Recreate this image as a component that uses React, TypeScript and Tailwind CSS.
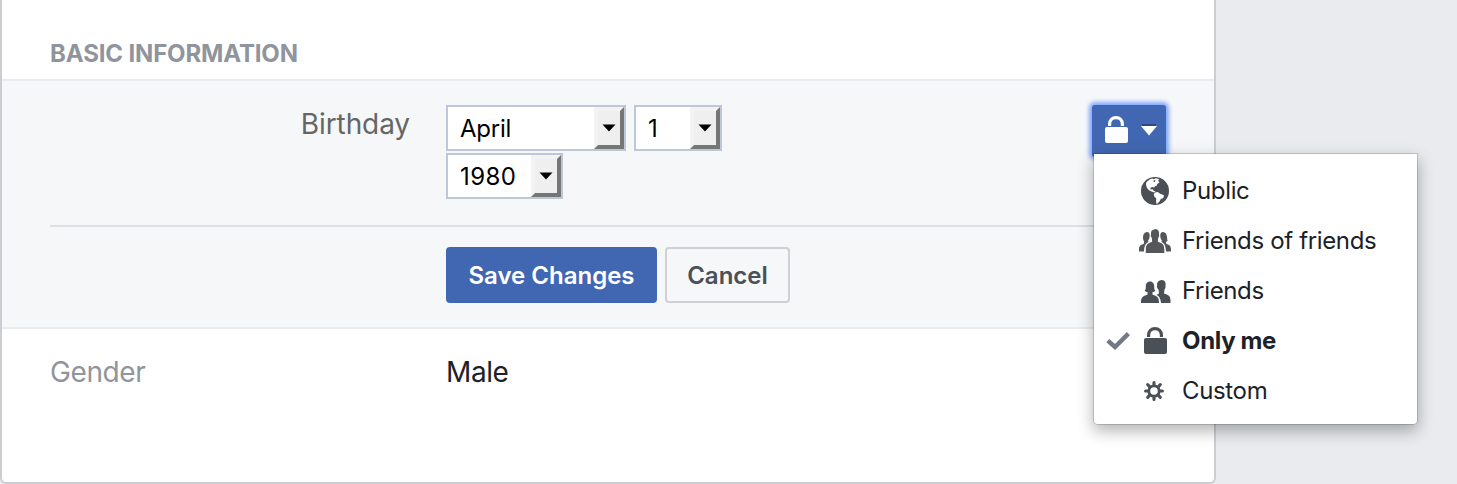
import type { ReactNode } from 'react';

function LockIcon() {
  return (
    <svg width="24" height="28" viewBox="0 0 24 28" fill="none">
      <path d="M4.6 10V8C4.6 4.2 7.3 1.6 11 1.6S17.4 4.2 17.4 8V10" stroke="currentColor" strokeWidth="3.2" />
      <rect x="0" y="11" width="23" height="16" rx="2" fill="currentColor" />
    </svg>
  );
}

function GlobeIcon() {
  return (
    <svg width="28" height="28" viewBox="0 0 28 28">
      <circle cx="14" cy="14" r="14" fill="#4b4f56" />
      <path
        d="M5.2 5.6C6.8 3.5 9 2 11.3 1.4L12.6 2.2L14.6 1.2L18.2 1.9L17.2 3.6L18.4 5.4L16.2 7L15.6 8.8L13.8 9.2L13.4 10.6L11.2 10L9.4 10.7L9.6 12.4L12 12.2L12.3 13.6L14.6 14.6L13.1 15.4L10.6 14.4L8 13.3L6 11L5.1 8Z"
        fill="#fff"
      />
      <path
        d="M14 15.4L16.8 15L19.2 16.7L23 18.2L22.3 21L19.8 22.1L18.3 24.8L15.6 27.2L15 24L15.3 21.5L13.3 19.4L12.8 17.2Z"
        fill="#fff"
      />
      <path d="M12.6 3.4L14.4 3.1L14 4.8L12.5 5.1Z" fill="#4b4f56" />
    </svg>
  );
}

function GroupIcon() {
  return (
    <svg width="32" height="24" viewBox="0 0 32 24" fill="#555659">
      <path d="M7.2 3.2C9 2.5 11.2 4 10.7 7.2C10.6 9.3 9.8 10.6 9.2 11.3L9.4 13C7.1 14.4 5.3 15.8 5 22.6H0V20.5C0 16.8 1.5 16 4.8 14.8L5.1 12.5C3.6 10.5 3.2 4.2 7.2 3.2Z" />
      <path d="M24.8 3.2C23 2.5 20.8 4 21.3 7.2C21.4 9.3 22.2 10.6 22.8 11.3L22.6 13C24.9 14.4 26.7 15.8 27 22.6H32V20.5C32 16.8 30.5 16 27.2 14.8L26.9 13L28.6 11.7C27.6 9.5 28.8 4 24.8 3.2Z" />
      <path d="M16 0C19.8 .2 20.3 3 20 5.4C20.6 6.4 19.8 8.3 19.2 8.8L18.8 12.7C22.5 14.1 25.3 14.6 25.3 20.5V24H6.8V20.5C6.8 14.6 9.6 14.1 13.2 12.7L12.8 8.8C12.2 8.3 11.4 6.4 12 5.4C11.7 2.5 12.8 1.1 14.5 .8Z" />
    </svg>
  );
}

function FriendsIcon() {
  return (
    <svg width="30" height="23" viewBox="0 0 30 23" fill="#4b4f56">
      <path d="M9 1.5C12 1.5 13.3 3.8 13.2 6.8C13.2 9 13.5 10 14.3 10.8C13.6 11.6 12.4 12 11.5 12.1V14.7C16.4 16 18 17.3 18 23H0C0 17.3 1.6 16 6.5 14.7V12.1C5.6 12 4.4 11.6 3.7 10.8C4.5 10 4.8 9 4.8 6.8C4.7 3.8 6 1.5 9 1.5Z" />
      <path d="M20.5 0C24.5 0 25 3.2 24.5 6C24.8 7.5 24 9.2 23.5 9.5L23 13.5C27.5 15 29.5 15.8 29.5 20.5V23H20C19.6 19.3 18.8 16.6 15.5 14.8L17.9 13.8L17.7 10C16.5 9 15.6 6.8 16.1 5.3C15.8 2 17.8 .2 20.5 0Z" />
    </svg>
  );
}

function GearIcon() {
  return (
    <svg width="20" height="20" viewBox="-10 -10 20 20" fill="none">
      <circle r="5.2" stroke="#4b4f56" strokeWidth="2.8" />
      <path
        d="M0-6V-8.4M0 6V8.4M-6 0H-8.4M6 0H8.4M4.2-4.2L6.3-6.3M-4.2 4.2L-6.3 6.3M4.2 4.2L6.3 6.3M-4.2-4.2L-6.3-6.3"
        stroke="#4b4f56"
        strokeWidth="3.1"
        strokeLinecap="round"
      />
    </svg>
  );
}

function CheckIcon() {
  return (
    <svg width="24" height="20" viewBox="0 0 24 20" fill="none">
      <path d="M1.8 9.6L9 16L22.4 2.6" stroke="#737985" strokeWidth="4.4" />
    </svg>
  );
}

function Select({ value, className }: { value: string; className: string }) {
  return (
    <button className={`flex h-[46px] shrink-0 items-stretch border-2 border-[#bdc7d8] bg-white text-left text-2xl text-black ${className}`}>
      <span className="flex-1 pl-3 leading-[43px]">{value}</span>
      <span className="flex w-[30px] items-center justify-center border-4 border-t-[#f3f3f3] border-r-[#767676] border-b-[#767676] border-l-[#f3f3f3] bg-[#efefef]">
        <svg width="14" height="8" viewBox="0 0 14 8">
          <path d="M.5 .5H13.5L7 7.5Z" fill="#000" />
        </svg>
      </span>
    </button>
  );
}

function MenuItem({ icon, children, checked = false }: { icon: ReactNode; children: ReactNode; checked?: boolean }) {
  return (
    <li className="flex h-[50px] items-center">
      <span className="flex w-[46px] shrink-0 justify-start pl-3">{checked && <CheckIcon />}</span>
      <span className="flex w-[42px] shrink-0">{icon}</span>
      {children}
    </li>
  );
}

export default function App() {
  return (
    <div className="relative h-[484px] w-[1457px] overflow-hidden bg-[#e9ebee] font-['Inter','Liberation_Sans',sans-serif] text-[#1d2129]">
      <main className="flex h-full w-[1216px] flex-col rounded-b-md border-2 border-t-0 border-[#cccdd2] bg-white">
        <h2 className="h-[81px] border-b-2 border-[#e9ebee] pt-[39px] pl-12 text-2xl leading-[30px] font-bold tracking-[-0.15px] text-[#90949c]">
          <span>BASIC INFORMATION</span>
        </h2>
        <section className="flex h-[248px] flex-col border-b-2 border-[#e9ebee] bg-[#f6f7f9] px-12">
          <div className="flex h-[146px] border-b-2 border-[#dddfe2] pt-6">
            <div className="w-[360px] pt-px text-right text-[28px] leading-9 tracking-[-0.1px] text-[#666]">
              <span>Birthday</span>
            </div>
            <div className="ml-9 flex w-[300px] flex-wrap content-start gap-x-2 gap-y-0.5">
              <Select value="April" className="w-[180px] tracking-[-0.25px]" />
              <Select value="1" className="w-[88px]" />
              <Select value="1980" className="w-[117px] tracking-[0.4px]" />
            </div>
            <button className="ml-auto flex h-[52px] w-[74px] items-start rounded-[3px] bg-[#4267b2] pt-[11px] pl-[13px] text-white shadow-[0_0_4px_3px_#7fa7ff]">
              <LockIcon />
              <svg width="16" height="12" viewBox="0 0 16 12" className="mt-2 ml-3">
                <path d="M1 0H15V2H1Z" fill="#2c4987" />
                <path d="M0 2H16L8 11.5Z" fill="#fff" />
              </svg>
            </button>
          </div>
          <div className="flex gap-2 pt-5 pl-[396px] text-2xl font-semibold">
            <button className="h-14 w-[211px] rounded-[4px] bg-[#4267b2] pt-0.5 text-white">
              <span>Save Changes</span>
            </button>
            <button className="h-14 w-[125px] rounded-[4px] border-2 border-[#ced0d4] bg-[#f6f7f9] pt-0.5 text-[#4b4f56]">
              <span>Cancel</span>
            </button>
          </div>
        </section>
        <div className="flex pt-[25px] pl-12 text-[28px] leading-9 tracking-[-0.4px]">
          <span className="w-[396px] text-[#90949c]"><span>Gender</span></span>
          <span>Male</span>
        </div>
      </main>
      <ul className="absolute top-[153px] left-[1093px] h-[272px] w-[325px] rounded-b-[5px] border border-black/15 bg-white bg-clip-padding pt-3 text-2xl tracking-[-0.35px] shadow-[0_6px_16px_rgba(0,0,0,0.3)]">
        <MenuItem icon={<span className="ml-px"><GlobeIcon /></span>}><span>Public</span></MenuItem>
        <MenuItem icon={<span className="-ml-px"><GroupIcon /></span>}><span>Friends of friends</span></MenuItem>
        <MenuItem icon={<span className="ml-px"><FriendsIcon /></span>}><span>Friends</span></MenuItem>
        <MenuItem checked icon={<span className="ml-1 text-[#4b4f56]"><LockIcon /></span>}>
          <span className="font-bold">Only me</span>
        </MenuItem>
        <MenuItem icon={<span className="ml-1"><GearIcon /></span>}><span>Custom</span></MenuItem>
      </ul>
    </div>
  );
}
